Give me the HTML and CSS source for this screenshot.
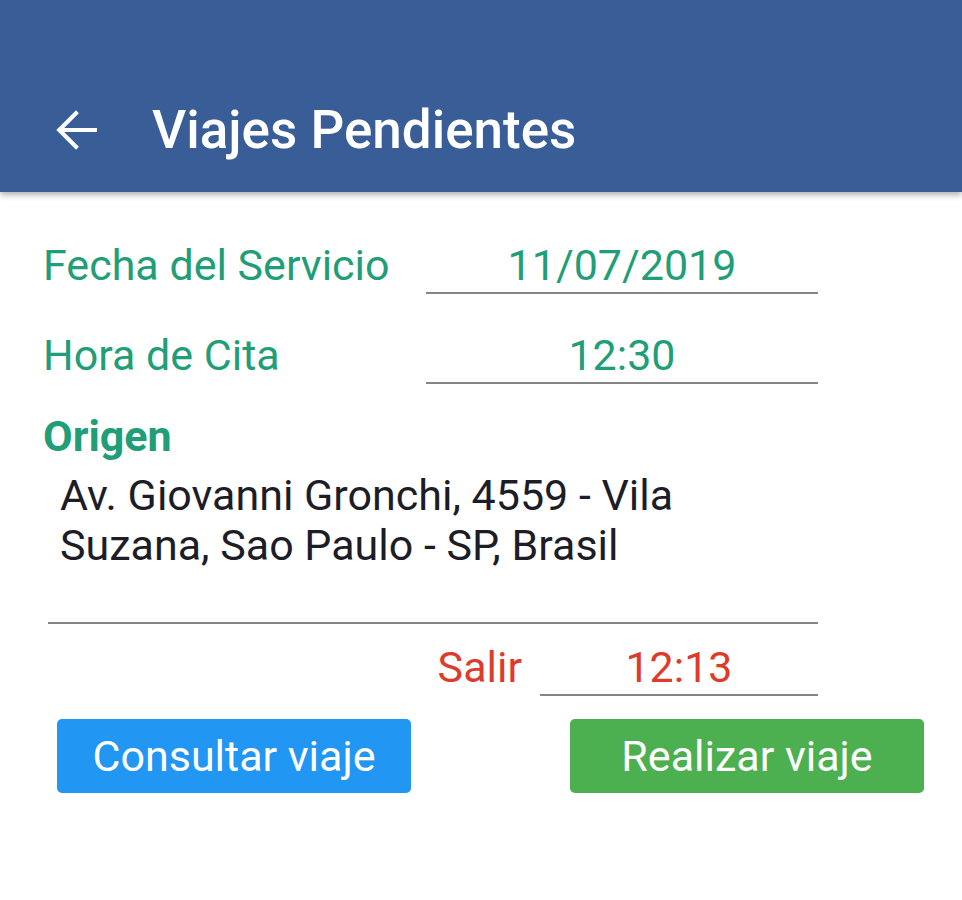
FILE: index.html
```html
<!DOCTYPE html>
<html lang="es">
<head>
  <meta charset="UTF-8">
  <title>Viajes Pendientes</title>
  <link rel="stylesheet" href="styles.css">
</head>
<body>
  <div class="toolbar">
    <svg class="back" viewBox="4 4 16 16" width="42" height="42">
      <path d="M20 11.2H7.5l5.6-5.6L12 4.5 4.5 12l7.5 7.5 1.1-1.1-5.6-5.6H20z" fill="#fff"/>
    </svg>
    <span class="title">Viajes Pendientes</span>
  </div>

  <div class="content">
    <div class="row">
      <span class="label">Fecha del Servicio</span>
      <span class="field">11/07/2019</span>
    </div>
    <div class="row">
      <span class="label">Hora de Cita</span>
      <span class="field">12:30</span>
    </div>

    <div class="origin-title">Origen</div>
    <div class="address">Av. Giovanni Gronchi, 4559 - Vila<br>Suzana, Sao Paulo - SP, Brasil</div>
    <div class="divider"></div>

    <div class="leave">
      <span class="leave-label">Salir</span>
      <span class="leave-field">12:13</span>
    </div>

    <div class="actions">
      <button class="btn btn-blue">Consultar viaje</button>
      <button class="btn btn-green">Realizar viaje</button>
    </div>
  </div>
</body>
</html>
```

FILE: styles.css
```css
body {
  margin: 0;
  font-family: Roboto, "Liberation Sans", sans-serif;
  background: #fff;
}
.toolbar {
  height: 192px;
  background-color: #385d97;
  box-shadow: 0 3px 6px rgba(0, 0, 0, 0.3);
  display: flex;
  align-items: center;
  padding: 68px 0 0 55px;
  box-sizing: border-box;
  color: #fff;
}
.back {
  flex-shrink: 0;
}
.title {
  margin-left: 55px;
  font-size: 53px;
  font-weight: 500;
  line-height: 60px;
}
.content {
  padding: 48px 0 0 43px;
  width: 775px;
}
.row {
  display: flex;
  align-items: flex-end;
  margin-bottom: 36px;
}
.label,
.field,
.leave-label,
.leave-field,
.origin-title {
  font-size: 43px;
  line-height: 50px;
}
.label {
  width: 383px;
  color: #1f9e77;
  padding-bottom: 4px;
}
.field {
  width: 392px;
  text-align: center;
  color: #1f9e77;
  border-bottom: 2px solid #858585;
  padding-bottom: 2px;
}
.origin-title {
  margin-top: -9px;
  font-weight: bold;
  color: #1f9e77;
}
.address {
  margin: 9px 0 0 17px;
  font-size: 43px;
  line-height: 50px;
  color: #1d1d28;
}
.divider {
  margin: 52px 0 0 5px;
  border-top: 2px solid #858585;
}
.leave {
  display: flex;
  justify-content: flex-end;
  align-items: flex-end;
  margin-top: 18px;
}
.leave-label {
  color: #dd3b2b;
  padding-bottom: 4px;
  margin-right: 18px;
}
.leave-field {
  width: 278px;
  text-align: center;
  color: #dd3b2b;
  border-bottom: 2px solid #858585;
  padding-bottom: 2px;
}
.actions {
  display: flex;
  justify-content: space-between;
  margin: 23px 0 0 14px;
  width: 867px;
}
.btn {
  width: 354px;
  height: 74px;
  border: none;
  border-radius: 5px;
  color: #fff;
  font-family: Roboto, "Liberation Sans", sans-serif;
  font-size: 43px;
  padding: 0;
}
.btn-blue {
  background-color: #2196f3;
}
.btn-green {
  background-color: #4caf50;
}
```
